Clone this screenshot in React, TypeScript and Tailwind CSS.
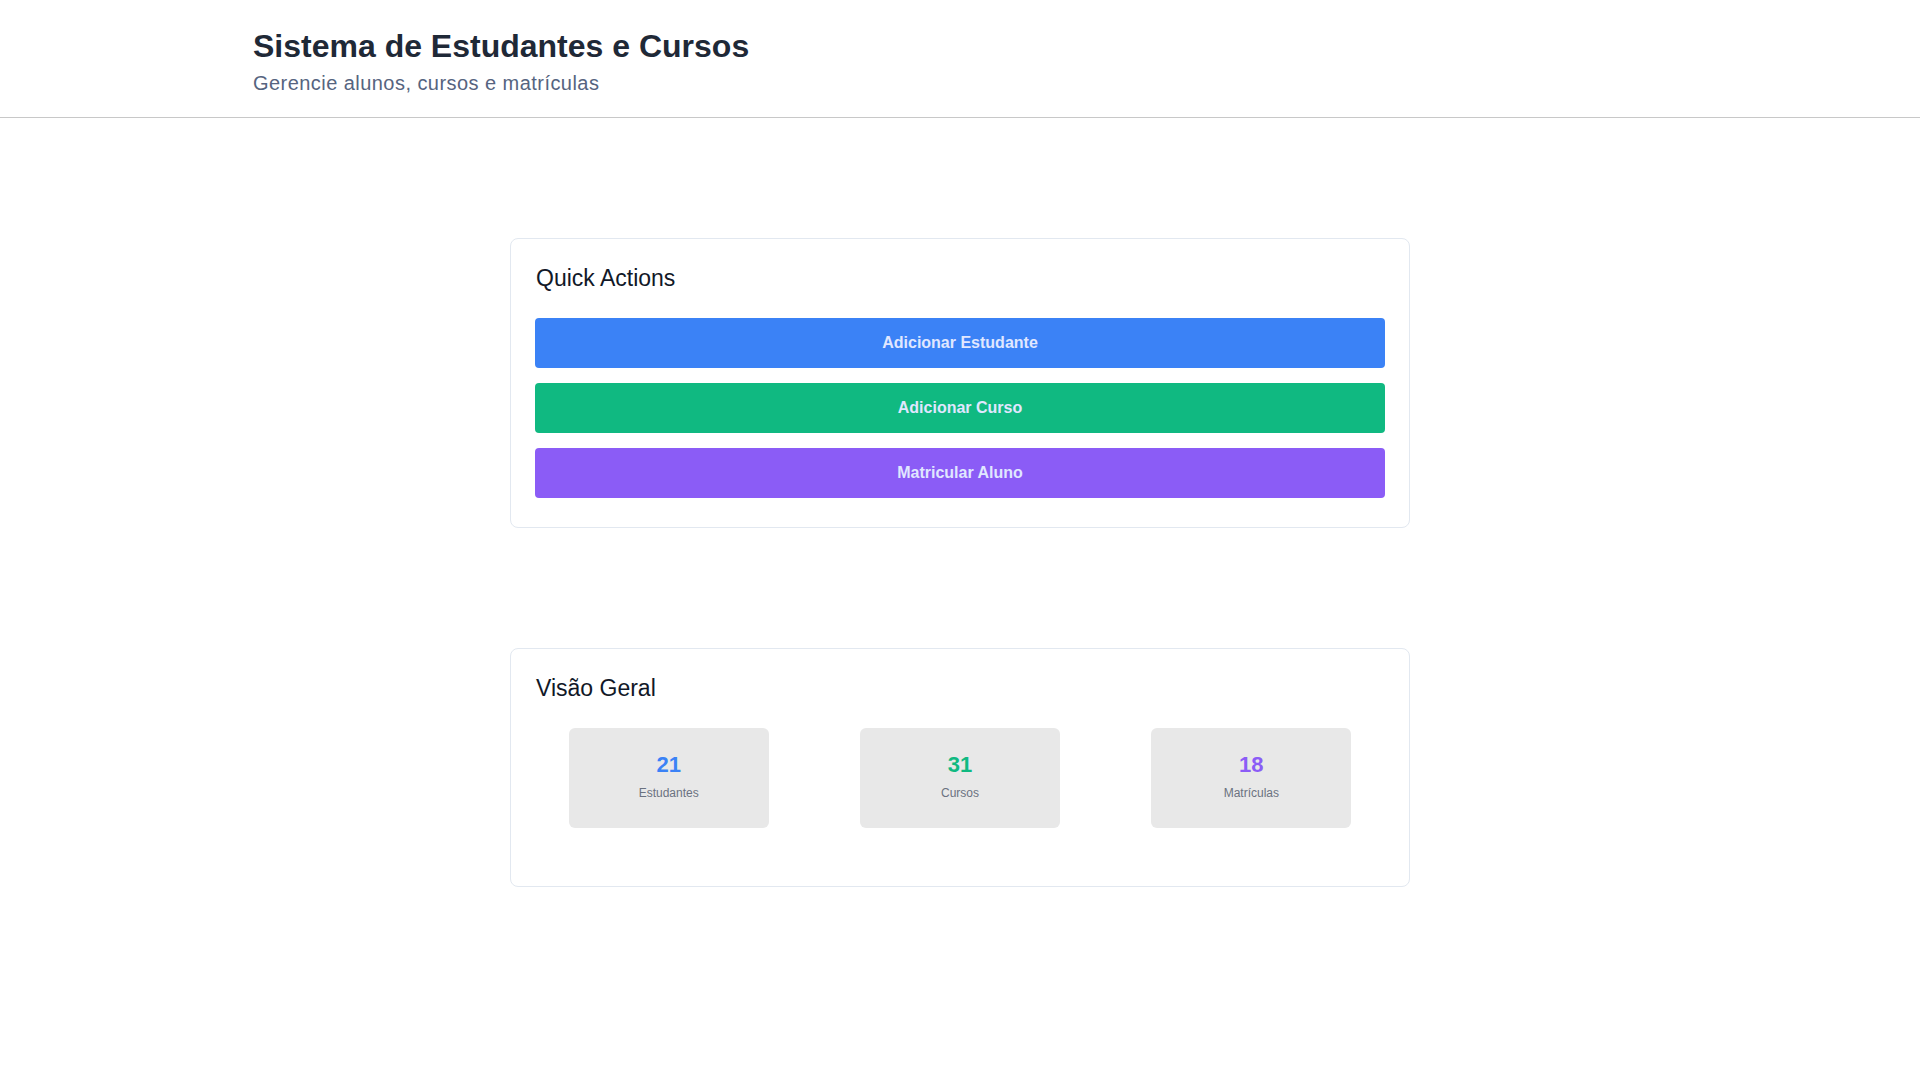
import React from "react";

const actions = [
  { label: "Adicionar Estudante", className: "bg-[#3b82f6]" },
  { label: "Adicionar Curso", className: "bg-[#10b981]" },
  { label: "Matricular Aluno", className: "bg-[#8b5cf6]" },
];

const stats = [
  { value: 21, label: "Estudantes", className: "text-[#3b82f6]" },
  { value: 31, label: "Cursos", className: "text-[#10b981]" },
  { value: 18, label: "Matrículas", className: "text-[#8b5cf6]" },
];

function Header() {
  return (
    <header className="border-b border-[#c8c8c8] bg-white">
      <div className="mx-auto max-w-[1414px] pt-7 pb-5">
        <h1 className="text-[32px] leading-[36px] font-bold text-[#1f2937]">
          Sistema de Estudantes e Cursos
        </h1>
        <p className="mt-[5px] text-xl leading-7 tracking-[0.45px] text-[#566480]">
          Gerencie alunos, cursos e matrículas
        </p>
      </div>
    </header>
  );
}

function QuickActions() {
  return (
    <section className="w-[900px] rounded-lg border border-[#e2e8f0] bg-white px-6 pt-[23px] pb-[29px]">
      <h2 className="mb-6 pl-px text-[23px] leading-8 text-[#111827]">Quick Actions</h2>
      <div className="flex flex-col gap-[15px]">
        {actions.map((a) => (
          <button
            key={a.label}
            className={`h-[50px] w-full rounded text-base font-bold text-[#e0e7ff] ${a.className}`}
          >
            {a.label}
          </button>
        ))}
      </div>
    </section>
  );
}

function Overview() {
  return (
    <section className="w-[900px] rounded-lg border border-[#e2e8f0] bg-white px-6 pt-[23px] pb-[58px]">
      <h2 className="mb-6 pl-px text-[23px] leading-8 text-[#111827]">Visão Geral</h2>
      <div className="grid grid-cols-3 gap-6">
        {stats.map((s) => (
          <div
            key={s.label}
            className="mx-auto flex h-[100px] w-[200px] flex-col items-center rounded-md bg-[#e8e8e8] pt-6"
          >
            <span className={`text-[22px] leading-[25px] font-bold ${s.className}`}>
              {s.value}
            </span>
            <span className="mt-2 text-xs leading-4 text-[#6b7280]">{s.label}</span>
          </div>
        ))}
      </div>
    </section>
  );
}

export default function App() {
  return (
    <div className="min-h-screen bg-white font-['Liberation_Sans',Arial,sans-serif]">
      <Header />
      <main className="flex flex-col items-center gap-[120px] pt-[120px] pb-20">
        <QuickActions />
        <Overview />
      </main>
    </div>
  );
}
